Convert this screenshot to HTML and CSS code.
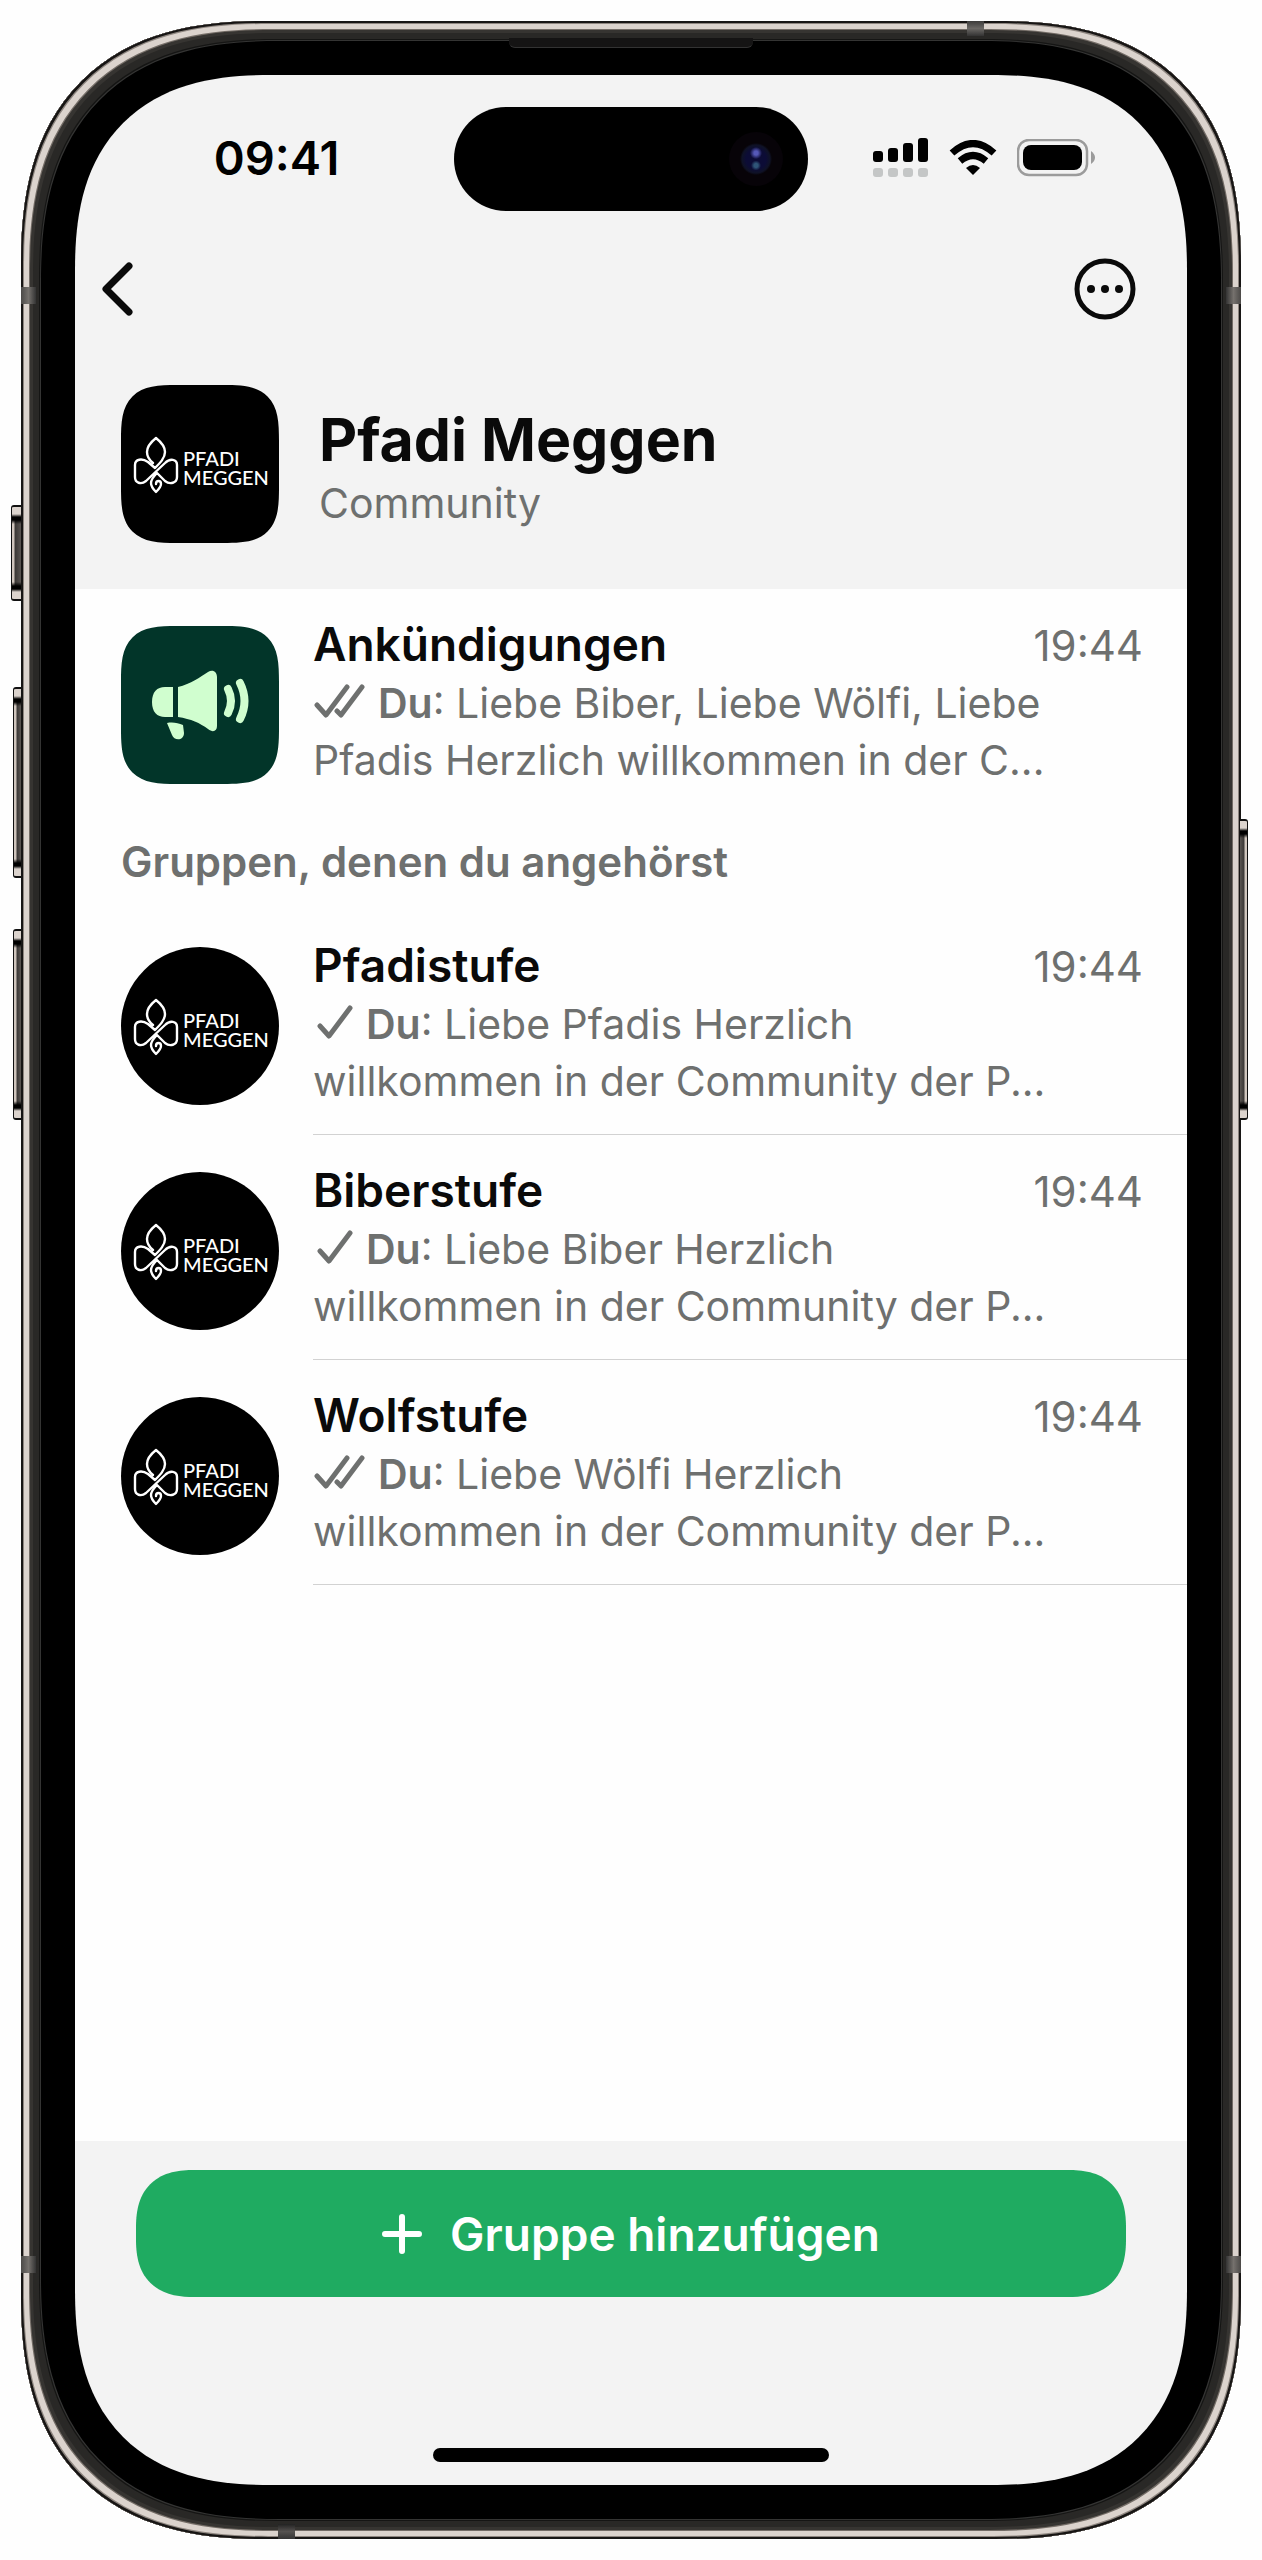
FILE: index.html
```html
<!DOCTYPE html>
<html lang="de">
<head>
<meta charset="utf-8">
<meta name="viewport" content="width=device-width, initial-scale=1">
<title>Pfadi Meggen</title>
<link rel="stylesheet" href="styles.css">
</head>
<body>
<svg class="defs" aria-hidden="true">
  <symbol id="lily" viewBox="11 51 46 58">
    <g fill="none" stroke="#fff" stroke-width="2.400" stroke-linejoin="round" stroke-linecap="round">
      <path d="M31 78C26 74 25 71 25 67C25 62 29 57 34 53C39 57 43 62 43 67C43 73 38 78 33 83L26 77C20 73 13 74 13 80V92C13 98 19 100 24 96L43 78C48 73 55 74 55 80V92C55 98 48 100 43 96L35 88C32 91 29 94 29 98C29 102 31 104 34 107C37 104 39 102 39 99C39 95 34 95 34 99"/>
    </g>
  </symbol>
  <symbol id="check" viewBox="0 0 42 34">
    <path d="M7 21L16 31L37 3" fill="none" stroke="currentColor" stroke-width="5" stroke-linecap="round" stroke-linejoin="round"/>
  </symbol>
  <symbol id="double-check" viewBox="0 0 54 34">
    <path d="M4 21L13 31L34 3M24 27L28 31L49 3" fill="none" stroke="currentColor" stroke-width="5" stroke-linecap="round" stroke-linejoin="round"/>
  </symbol>
</svg>
<div class="phone">
  <i class="side mute"></i>
  <i class="side volume-up"></i>
  <i class="side volume-down"></i>
  <i class="side power"></i>
  <i class="band left upper"></i>
  <i class="band right upper"></i>
  <i class="band left lower"></i>
  <i class="band right lower"></i>
  <i class="band top"></i>
  <i class="band bottom"></i>
  <i class="speaker"></i>
  <div class="screen">
    <div class="status">
      <time class="clock">09:41</time>
      <div class="island"><i class="camera"></i></div>
      <div class="indicators">
        <svg width="56" height="40" viewBox="0 0 56 40">
          <rect x="0" y="13" width="10" height="11" rx="3"/>
          <rect x="15" y="10" width="10" height="14" rx="3"/>
          <rect x="30" y="5" width="10" height="19" rx="3"/>
          <rect x="45" y="0" width="10" height="24" rx="3"/>
          <g fill="#c4c6c6"><rect x="0" y="30" width="10" height="9" rx="3"/><rect x="15" y="30" width="10" height="9" rx="3"/><rect x="30" y="30" width="10" height="9" rx="3"/><rect x="45" y="30" width="10" height="9" rx="3"/></g>
        </svg>
        <svg width="48" height="36" viewBox="0 0 48 36">
          <g fill="none" stroke="#000" stroke-width="7"><path d="M3 13Q24 -6 45 13"/><path d="M11 21Q24 10 37 21"/></g>
          <path d="M24 35L17 28Q24 22 31 28Z"/>
        </svg>
        <svg width="78" height="38" viewBox="0 0 78 38">
          <rect x="1" y="1" width="69" height="35" rx="11" fill="none" stroke="#9b9b9b" stroke-width="2.500"/>
          <rect x="6" y="6" width="59" height="25" rx="8"/>
          <path d="M74 12Q78 15 78 18.500T74 25Z" fill="#9b9b9b"/>
        </svg>
      </div>
    </div>
    <nav class="nav">
      <button class="icon-button" type="button" aria-label="Zurück">
        <svg width="38" height="62" viewBox="0 0 38 62"><path d="M30 8L7 31L30 54" fill="none" stroke="#0a0a0a" stroke-width="7" stroke-linecap="round" stroke-linejoin="round"/></svg>
      </button>
      <button class="icon-button" type="button" aria-label="Mehr">
        <svg width="62" height="62" viewBox="0 0 62 62"><circle cx="31" cy="31" r="28" fill="none" stroke="#0a0a0a" stroke-width="5"/><g fill="#0a0a0a"><circle cx="17" cy="31" r="4"/><circle cx="31" cy="31" r="4"/><circle cx="45" cy="31" r="4"/></g></svg>
      </button>
    </nav>
    <header class="community">
      <div class="avatar square"><svg class="lily"><use href="#lily"/></svg><span>PFADI<br>MEGGEN</span></div>
      <div class="heading">
        <h1>Pfadi Meggen</h1>
        <p>Community</p>
      </div>
    </header>
    <main>
      <article class="chat">
        <div class="avatar square announce">
          <svg width="158" height="158" viewBox="0 0 158 158" aria-hidden="true">
            <g fill="#d0fecf">
              <path d="M52 61V91H44C36 91 31 86 31 76S36 61 44 61Z"/>
              <path d="M57 61C70 58 79 51 87 46C92 43 96 46 96 51V100C96 105 92 107 87 103C79 97 70 93 57 91Z"/>
              <path d="M46 97C52 96 57 97 62 99L63 107C63 115 53 115 51 109Z"/>
            </g>
            <g fill="none" stroke="#d0fecf" stroke-width="8" stroke-linecap="round"><path d="M107 63Q113 75 107 87"/><path d="M119 57Q128 75 119 93"/></g>
          </svg>
        </div>
        <div class="body">
          <div class="top-line"><h2>Ankündigungen</h2><time>19:44</time></div>
          <p><svg class="tick double"><use href="#double-check"/></svg><b>Du</b>: Liebe Biber, Liebe Wölfi, Liebe<br>Pfadis Herzlich willkommen in der C...</p>
        </div>
      </article>
      <h3>Gruppen, denen du angehörst</h3>
      <article class="chat group">
        <div class="avatar"><svg class="lily"><use href="#lily"/></svg><span>PFADI<br>MEGGEN</span></div>
        <div class="body">
          <div class="top-line"><h2>Pfadistufe</h2><time>19:44</time></div>
          <p><svg class="tick"><use href="#check"/></svg><b>Du</b>: Liebe Pfadis Herzlich<br>willkommen in der Community der P...</p>
        </div>
      </article>
      <article class="chat group">
        <div class="avatar"><svg class="lily"><use href="#lily"/></svg><span>PFADI<br>MEGGEN</span></div>
        <div class="body">
          <div class="top-line"><h2>Biberstufe</h2><time>19:44</time></div>
          <p><svg class="tick"><use href="#check"/></svg><b>Du</b>: Liebe Biber Herzlich<br>willkommen in der Community der P...</p>
        </div>
      </article>
      <article class="chat group">
        <div class="avatar"><svg class="lily"><use href="#lily"/></svg><span>PFADI<br>MEGGEN</span></div>
        <div class="body">
          <div class="top-line"><h2>Wolfstufe</h2><time>19:44</time></div>
          <p><svg class="tick double"><use href="#double-check"/></svg><b>Du</b>: Liebe Wölfi Herzlich<br>willkommen in der Community der P...</p>
        </div>
      </article>
    </main>
    <footer>
      <button class="add" type="button">
        <svg width="40" height="40" viewBox="0 0 40 40"><path d="M20 3V37M3 20H37" stroke="#fff" stroke-width="6" stroke-linecap="round"/></svg>
        Gruppe hinzufügen
      </button>
      <i class="home"></i>
    </footer>
  </div>
</div>
</body>
</html>
```
FILE: styles.css
```css
* { box-sizing: border-box; }
body {
  margin: 0;
  padding: 21px;
  background: #fefefe;
  color: #0a0a0a;
  font-family: Inter, "Liberation Sans", sans-serif;
}
h1, h2, h3, p { margin: 0; }
button { border: 0; padding: 0; font: inherit; cursor: pointer; }
svg { display: block; flex: none; }
.defs { position: absolute; width: 0; height: 0; }

/* Device frame */
.phone {
  position: relative;
  display: flex;
  min-height: calc(100vh - 42px);
  padding: 54px;
  border-radius: 208px;
  background: #000;
  box-shadow:
    inset 0 0 0 2px #171514,
    inset 0 0 0 3px #8d857f,
    inset 0 0 0 8px #dbd3cd,
    inset 0 0 0 9px #736c66,
    inset 0 0 0 12px #363431,
    inset 0 0 0 18px #292826,
    inset 0 0 0 19px #151514,
    inset 0 0 0 20px #343433;
}
.side {
  position: absolute;
  left: -8px;
  width: 8px;
  height: 191px;
  border: solid #111;
  border-width: 2px 0 2px 1px;
  border-radius: 3px 0 0 3px;
  background: linear-gradient(#dbd3cd 0 7px, #000 10px 13px, transparent 17px calc(100% - 17px), #000 calc(100% - 13px) calc(100% - 10px), #dbd3cd calc(100% - 7px)),
    linear-gradient(90deg, #cfc5bd 0 2px, #3a3735 3px, #5b5653);
}
.mute { top: 484px; left: -10px; width: 10px; height: 96px; }
.volume-up { top: 666px; }
.volume-down { top: 908px; }
.power {
  top: 798px;
  left: auto;
  right: -7px;
  height: 301px;
  transform: scaleX(-1);
}
.band { position: absolute; width: 15px; height: 17px; background: linear-gradient(90deg, #4b4947, #75716d, #333); }
.left { left: 0; }
.right { right: 0; transform: scaleX(-1); }
.upper { top: 266px; }
.lower { bottom: 266px; }
.top, .bottom { width: 17px; height: 15px; background: linear-gradient(#3c3b3a, #6b6865, #333); }
.top { top: 0; right: 257px; }
.bottom { bottom: 0; left: 257px; background: linear-gradient(#222, #555250, #333); }
.speaker {
  position: absolute;
  top: 17px;
  left: calc(50% - 122px);
  width: 244px;
  height: 10px;
  border-bottom: 1px solid #333;
  border-radius: 0 0 6px 6px;
  background: #151414;
}

/* Screen */
.screen {
  flex: 1;
  min-width: 0;
  display: flex;
  flex-direction: column;
  overflow: hidden;
  border-radius: 162px;
  background: #f3f3f3;
}
.status {
  display: grid;
  grid-template-columns: 1fr 354px 1fr;
  align-items: center;
  padding-top: 32px;
}
.clock {
  padding: 0 0 2px 24px;
  color: #000;
  font-size: 47px;
  font-weight: 600;
  line-height: 56px;
  text-align: center;
}
.island {
  display: flex;
  align-items: center;
  justify-content: flex-end;
  height: 104px;
  padding-right: 25px;
  border-radius: 52px;
  background: #000;
}
.camera {
  width: 54px;
  height: 54px;
  border-radius: 50%;
  background:
    radial-gradient(circle at 50% 39%, #5558b8 0 2px, transparent 6px),
    radial-gradient(circle at 50% 62%, #2f5578 0 2px, transparent 5px),
    radial-gradient(circle, #0c0c36 0 10px, #0f1226 14px, #070308 16px);
}
.indicators {
  display: flex;
  align-items: center;
  justify-content: center;
  gap: 20px;
  padding: 0 28px 2px 0;
}
.nav {
  display: flex;
  justify-content: space-between;
  padding: 47px 51px 65px 24px;
}
.icon-button { background: none; }
.community {
  display: flex;
  align-items: center;
  gap: 40px;
  padding: 0 46px 46px;
}
.heading { padding-top: 4px; }
.avatar {
  flex: none;
  display: flex;
  align-items: center;
  gap: 4px;
  width: 158px;
  height: 158px;
  padding: 2px 0 0 12px;
  border-radius: 50%;
  background: #000;
  color: #fff;
  font-family: Lato, sans-serif;
  font-size: 20px;
  font-weight: 500;
  line-height: 19px;
}
.avatar span { padding-top: 6px; }
.lily { width: 46px; height: 58px; }
.square { border-radius: 38px; }
.announce { padding: 0; background: #023529; }
h1 { font-size: 59px; font-weight: 700; line-height: 72px; }
.community p, .body p { color: #6e706f; font-size: 41px; }
.body time, h3 { color: #6e706f; font-size: 42px; }
.community p { margin-top: 2px; line-height: 50px; }

/* Chat list */
main { flex: 1; background: #fefefe; }
.chat {
  display: flex;
  gap: 34px;
  padding-left: 46px;
}
.chat .avatar { margin-top: 37px; }
.body { flex: 1; min-width: 0; padding: 26px 44px 24px 0; }
.group .body { border-bottom: 1px solid #d2d2d2; }
.top-line { display: flex; justify-content: space-between; align-items: baseline; }
h2 { font-size: 46px; font-weight: 600; line-height: 58px; }
.body p { margin-top: 2px; line-height: 57px; white-space: nowrap; }
.body b { font-weight: 600; }
h3 { padding: 23px 46px; font-weight: 600; line-height: 51px; }
.tick { display: inline-block; width: 42px; height: 34px; margin-right: 11px; }
.double { width: 54px; }

/* Footer */
footer {
  display: flex;
  flex-direction: column;
  align-items: center;
  padding: 29px 61px 23px;
}
.add {
  display: flex;
  align-items: center;
  justify-content: center;
  gap: 28px;
  width: 100%;
  height: 127px;
  margin-bottom: 151px;
  border-radius: 46px;
  background: #1fab61;
  color: #fff;
  font-size: 46px;
  font-weight: 600;
}
.home { width: 396px; height: 14px; border-radius: 7px; background: #000; }

/* Continuous-curvature corners where the browser can draw them */
@supports (corner-shape: superellipse(1.3)) {
  .phone, .screen, .add { corner-shape: superellipse(1.3); }
  .phone { border-radius: 246px; }
  .screen { border-radius: 196px; }
  .add { border-radius: 58px; }
  .square { border-radius: 56px; corner-shape: superellipse(1.6); }
}
```
